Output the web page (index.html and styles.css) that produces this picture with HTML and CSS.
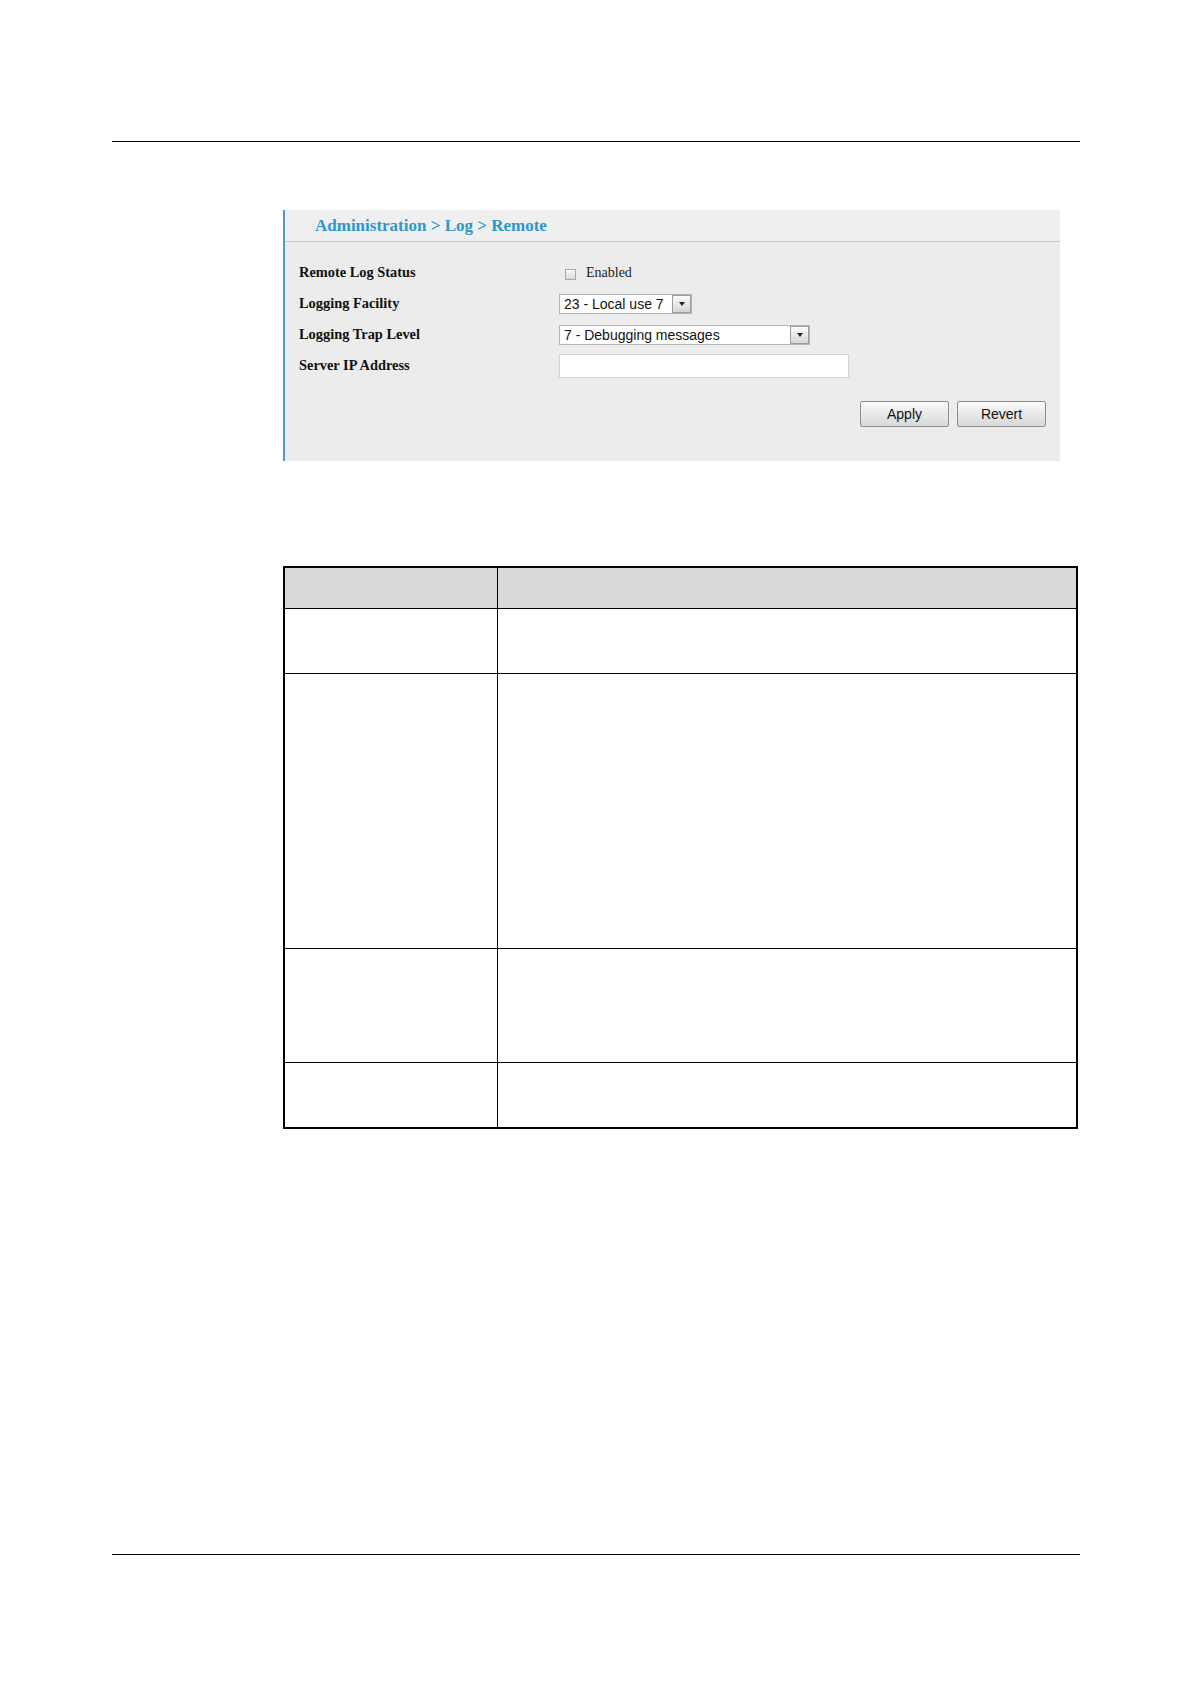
FILE: index.html
```html
<!DOCTYPE html>
<html>
<head>
<meta charset="utf-8">
<link rel="stylesheet" href="styles.css">
</head>
<body>
<div class="page">
  <div class="rule rule-top"></div>

  <div class="panel">
    <div class="panel-head"><span class="title">Administration &gt; Log &gt; Remote</span></div>
    <div class="panel-body">
      <div class="form">
        <div class="label">Remote Log Status</div>
        <div class="ctl"><span class="check"></span><span class="check-text">Enabled</span></div>

        <div class="label">Logging Facility</div>
        <div class="ctl"><div class="select sel-short"><span class="sel-text">23 - Local use 7</span><span class="sel-btn"><span class="tri"></span></span></div></div>

        <div class="label">Logging Trap Level</div>
        <div class="ctl"><div class="select sel-long"><span class="sel-text">7 - Debugging messages</span><span class="sel-btn"><span class="tri"></span></span></div></div>

        <div class="label">Server IP Address</div>
        <div class="ctl"><div class="textbox"></div></div>
      </div>
      <div class="actions">
        <span class="btn">Apply</span>
        <span class="btn">Revert</span>
      </div>
    </div>
  </div>

  <table class="desc">
    <tr class="head"><th class="c1"></th><th class="c2"></th></tr>
    <tr class="r1"><td></td><td></td></tr>
    <tr class="r2"><td></td><td></td></tr>
    <tr class="r3"><td></td><td></td></tr>
    <tr class="r4"><td></td><td></td></tr>
  </table>

  <div class="rule rule-bottom"></div>
</div>
</body>
</html>
```

FILE: styles.css
```css
html, body {
  margin: 0;
  padding: 0;
  background: #ffffff;
}
.page {
  width: 1190px;
  height: 1684px;
  padding-top: 141px;
  box-sizing: border-box;
  position: relative;
}
.rule {
  height: 0;
  border-top: 1.5px solid #000;
  margin-left: 112px;
  width: 968px;
}
.panel {
  margin-top: 68px;
  margin-left: 283px;
  width: 777px;
  height: 251px;
  box-sizing: border-box;
  background: #ececec;
  border-left: 2px solid #4f9ac3;
}
.panel-head {
  height: 31px;
  border-bottom: 1px solid #c5c5c5;
  background: #efefef;
  display: flex;
  align-items: center;
  padding-left: 30px;
}
.title {
  font-family: "Liberation Serif", "Times New Roman", serif;
  font-weight: bold;
  font-size: 17px;
  color: #2d98cb;
}
.panel-body {
  padding: 15px 14px 0 14px;
}
.form {
  display: grid;
  grid-template-columns: 260px 1fr;
  grid-auto-rows: 31px;
}
.label {
  font-family: "Liberation Serif", "Times New Roman", serif;
  font-weight: bold;
  font-size: 14.4px;
  color: #111;
  display: flex;
  align-items: center;
}
.ctl {
  display: flex;
  align-items: center;
}
.check {
  width: 9px;
  height: 9px;
  border: 1px solid #a8a8a8;
  background: linear-gradient(#f8f8f8, #dcdcdc);
  margin-left: 6px;
  margin-top: 3px;
}
.check-text {
  font-family: "Liberation Serif", "Times New Roman", serif;
  font-size: 14px;
  color: #222;
  margin-left: 10px;
}
.select {
  height: 20px;
  box-sizing: border-box;
  background: #fff;
  border: 1px solid #b4b4b4;
  display: flex;
  align-items: center;
  justify-content: space-between;
}
.sel-short { width: 133px; }
.sel-long { width: 251px; }
.sel-text {
  font-family: "Liberation Sans", Arial, sans-serif;
  font-size: 14px;
  color: #111;
  padding-left: 4px;
  white-space: nowrap;
}
.sel-btn {
  width: 19px;
  height: 18px;
  box-sizing: border-box;
  border: 1px solid #9c9c9c;
  background: linear-gradient(#fafafa, #d6d6d6);
  display: flex;
  align-items: center;
  justify-content: center;
}
.tri {
  width: 0;
  height: 0;
  border-left: 3px solid transparent;
  border-right: 3px solid transparent;
  border-top: 4px solid #222;
}
.textbox {
  width: 290px;
  height: 24px;
  box-sizing: border-box;
  background: #fff;
  border: 1px solid #d4d4d4;
}
.actions {
  display: flex;
  justify-content: flex-end;
  gap: 8px;
  margin-top: 20px;
}
.btn {
  width: 89px;
  height: 26px;
  box-sizing: border-box;
  border: 1px solid #8e8e8e;
  border-radius: 2px;
  background: linear-gradient(#fbfbfb, #e6e6e6 55%, #d9d9d9);
  font-family: "Liberation Sans", Arial, sans-serif;
  font-size: 14px;
  color: #111;
  display: flex;
  align-items: center;
  justify-content: center;
}
.desc {
  margin-top: 105px;
  margin-left: 283px;
  width: 795px;
  border-collapse: collapse;
  border: 2px solid #000;
}
.desc th, .desc td {
  border: 1.5px solid #000;
  padding: 0;
}
.desc .c1 { width: 212px; }
.desc .head th {
  background: #d9d9d9;
  height: 40px;
}
.desc .r1 td { height: 64px; }
.desc .r2 td { height: 274px; }
.desc .r3 td { height: 113px; }
.desc .r4 td { height: 64px; }
.rule-bottom {
  margin-top: 425px;
}
```
